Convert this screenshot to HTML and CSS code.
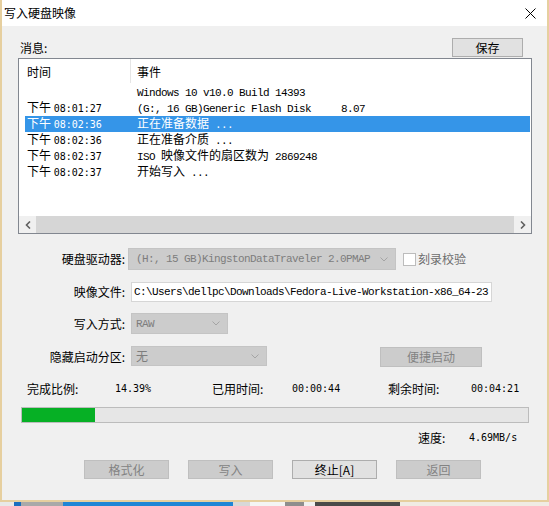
FILE: index.html
```html
<!DOCTYPE html>
<html lang="zh-CN">
<head>
<meta charset="utf-8">
<title>写入硬盘映像</title>
<link rel="stylesheet" href="styles.css">
</head>
<body>
<div class="window">
  <div class="titlebar">
    <span class="title">写入硬盘映像</span>
    <svg class="close" width="11" height="11" viewBox="0 0 11 11"><path d="M0.5 0.5 L10.5 10.5 M10.5 0.5 L0.5 10.5" stroke="#000" stroke-width="1" fill="none"/></svg>
  </div>
  <div class="client">
    <div class="msg-head">
      <span class="msg-label">消息:</span>
      <div class="btn save">保存</div>
    </div>
    <div class="listview">
      <div class="lv-header">
        <div class="lv-h-time">时间</div>
        <div class="lv-h-div"></div>
        <div class="lv-h-event">事件</div>
      </div>
      <div class="lv-rows">
        <div class="row"><span class="c-time"></span><span class="c-event"><span class="m">Windows 10 v10.0 Build 14393</span></span></div>
        <div class="row"><span class="c-time">下午 <span class="d">08:01:27</span></span><span class="c-event"><span class="m">(G:, 16 GB)Generic Flash Disk     8.07</span></span></div>
        <div class="row sel"><span class="c-time">下午 <span class="d">08:02:36</span></span><span class="c-event">正在准备数据<span class="m"> ...</span></span></div>
        <div class="row"><span class="c-time">下午 <span class="d">08:02:36</span></span><span class="c-event">正在准备介质<span class="m"> ...</span></span></div>
        <div class="row"><span class="c-time">下午 <span class="d">08:02:37</span></span><span class="c-event"><span class="m">ISO </span>映像文件的扇区数为<span class="m"> 2869248</span></span></div>
        <div class="row"><span class="c-time">下午 <span class="d">08:02:37</span></span><span class="c-event">开始写入<span class="m"> ...</span></span></div>
      </div>
      <div class="lv-spacer"></div>
      <div class="hscroll">
        <div class="sb-btn"><svg width="6" height="8" viewBox="0 0 6 8"><polyline points="5,0.5 1.5,4 5,7.5" fill="none" stroke="#606060" stroke-width="1.6"/></svg></div>
        <div class="sb-track"></div>
        <div class="sb-btn"><svg width="6" height="8" viewBox="0 0 6 8"><polyline points="1,0.5 4.5,4 1,7.5" fill="none" stroke="#606060" stroke-width="1.6"/></svg></div>
      </div>
    </div>

    <div class="form">
      <div class="frow r1">
        <span class="flabel">硬盘驱动器:</span>
        <div class="combo dis c-drive"><span class="m">(H:, 15 GB)KingstonDataTraveler 2.0PMAP</span><svg class="arrow" width="8" height="5" viewBox="0 0 8 5"><polyline points="0.5,0.5 4,4 7.5,0.5" fill="none" stroke="#a4a4a4" stroke-width="1"/></svg></div>
        <div class="check"></div>
        <span class="check-label">刻录校验</span>
      </div>
      <div class="frow r2">
        <span class="flabel">映像文件:</span>
        <div class="textbox"><span class="m">C:\Users\dellpc\Downloads\Fedora-Live-Workstation-x86_64-23</span></div>
      </div>
      <div class="frow r3">
        <span class="flabel">写入方式:</span>
        <div class="combo dis c-mode"><span class="m">RAW</span><svg class="arrow" width="8" height="5" viewBox="0 0 8 5"><polyline points="0.5,0.5 4,4 7.5,0.5" fill="none" stroke="#a4a4a4" stroke-width="1"/></svg></div>
      </div>
      <div class="frow r4">
        <span class="flabel">隐藏启动分区:</span>
        <div class="combo dis c-part"><span>无</span><svg class="arrow" width="8" height="5" viewBox="0 0 8 5"><polyline points="0.5,0.5 4,4 7.5,0.5" fill="none" stroke="#a4a4a4" stroke-width="1"/></svg></div>
        <div class="btn dis quick">便捷启动</div>
      </div>
    </div>

    <div class="stats">
      <span>完成比例:</span>
      <span class="d">14.39%</span>
      <span>已用时间:</span>
      <span class="d">00:00:44</span>
      <span>剩余时间:</span>
      <span class="d">00:04:21</span>
    </div>

    <div class="progress"><div class="fill" style="width:14.39%"></div></div>

    <div class="speed">
      <span class="speed-label">速度:</span>
      <span class="d">4.69MB/s</span>
    </div>

    <div class="actions">
      <div class="btn dis act">格式化</div>
      <div class="btn dis act">写入</div>
      <div class="btn act">终止[A]</div>
      <div class="btn dis act">返回</div>
    </div>
  </div>
</div>
<div class="desktop">
  <div class="seg s1"></div><div class="seg s2"></div><div class="seg s3"></div><div class="seg s4"></div><div class="seg s5"></div><div class="seg s6"></div><div class="seg s7"></div><div class="seg s8"></div><div class="seg s9"></div><div class="seg s10"></div>
</div>
</body>
</html>
```

FILE: styles.css
```css
* { box-sizing: border-box; }
html, body { margin: 0; padding: 0; }
body {
  width: 549px;
  height: 506px;
  overflow: hidden;
  background: #f3ece0;
  font-family: "Noto Sans CJK SC", "Microsoft YaHei", sans-serif;
  font-size: 12px;
  line-height: 16px;
  color: #000;
}
.m {
  font-family: "Liberation Mono", monospace;
  font-size: 11px;
  letter-spacing: -0.6px;
  white-space: pre;
}
.d {
  font-family: "DejaVu Sans Mono", monospace;
  font-size: 10px;
  white-space: pre;
}

.window {
  width: 549px;
  height: 502px;
  border-left: 2px solid #e6cf9f;
  border-right: 2px solid #e6cf9f;
  border-bottom: 2px solid #e6cf9f;
  background: #f0f0f0;
  display: flex;
  flex-direction: column;
}
.titlebar {
  flex: none;
  height: 26px;
  background: #fff;
  display: flex;
  align-items: center;
  justify-content: space-between;
  padding-left: 2px;
  padding-right: 11px;
}
.title { line-height: 16px; }
.close { display: block; margin-top: 1px; }

.client {
  flex: 1;
  display: flex;
  flex-direction: column;
  padding: 0 15px 0 16px;
}
.msg-head {
  height: 32px;
  display: flex;
  justify-content: space-between;
  align-items: flex-end;
}
.msg-label { margin-left: 2px; margin-bottom: 2px; }

.btn {
  height: 19px;
  display: flex;
  align-items: center;
  justify-content: center;
  border: 1px solid #adadad;
  background: #e1e1e1;
  color: #000;
}
.btn.dis {
  border-color: #bfbfbf;
  background: #cccccc;
  color: #838383;
}
.btn.save { width: 71px; margin-right: 9px; margin-bottom: 1px; }

.listview {
  height: 176px;
  border: 1px solid #828790;
  background: #fff;
  display: flex;
  flex-direction: column;
}
.lv-header { height: 25px; display: flex; align-items: center; }
.lv-h-time { width: 111px; padding-left: 8px; }
.lv-h-div { width: 1px; height: 24px; align-self: flex-start; background: #e5e5e5; }
.lv-h-event { padding-left: 6px; }
.lv-rows { display: flex; flex-direction: column; }
.row {
  height: 16px;
  margin: 0 1px 0 6px;
  display: flex;
  align-items: center;
  white-space: pre;
}
.row.sel { background: #3595e8; color: #fff; }
.c-time { width: 112px; padding-left: 2px; }
.lv-spacer { flex: 1; }
.hscroll { height: 17px; display: flex; }
.sb-btn {
  width: 17px;
  display: flex;
  align-items: center;
  justify-content: center;
  background: #f0f0f0;
}
.sb-track { flex: 1; background: #d6d6d6; }

.form { margin-top: 14px; display: flex; flex-direction: column; }
.frow { display: flex; align-items: center; }
.r1 { height: 22px; }
.r2 { height: 20px; margin-top: 12px; }
.r3 { height: 21px; margin-top: 11px; }
.r4 { height: 21px; margin-top: 12px; }
.flabel {
  width: 110px;
  flex: none;
  text-align: right;
  padding-right: 3px;
  margin-right: 3px;
}
.combo {
  height: 100%;
  display: flex;
  align-items: center;
  justify-content: space-between;
  padding: 0 7px 0 4px;
  overflow: hidden;
  white-space: nowrap;
}
.combo.dis { background: #cccccc; border: 1px solid #c4c4c4; color: #7d7d7d; }
.c-drive { width: 268px; margin-left: -3px; padding-left: 7px; }
.c-mode { width: 97px; }
.c-part { width: 136px; height: 20px; align-self: flex-start; }
.arrow { flex: none; display: block; }
.check {
  width: 13px;
  height: 13px;
  margin-left: 7px;
  border: 1px solid #bcbcbc;
  background: #fff;
}
.check-label { margin-left: 2px; color: #6d6d6d; }
.textbox {
  width: 361px;
  height: 100%;
  background: #fff;
  border: 1px solid #d6d6d6;
  padding-left: 2px;
  display: flex;
  align-items: center;
  overflow: hidden;
  white-space: nowrap;
}
.quick { width: 102px; height: 20px; margin-left: 113px; align-self: flex-end; }

.stats {
  margin-top: 14px;
  height: 16px;
  padding-left: 9px;
  display: grid;
  grid-template-columns: 88px 97px 80px 96px 83px auto;
  align-items: center;
}
.progress {
  margin-top: 10px;
  margin-left: 3px;
  width: 508px;
  height: 16px;
  border: 1px solid #bcbcbc;
  background: #e6e6e6;
}
.fill { height: 100%; background: #06b025; }
.speed {
  margin-top: 7px;
  height: 16px;
  padding-left: 400px;
  display: flex;
  align-items: center;
}
.speed-label { width: 51px; }
.actions {
  margin-top: 14px;
  padding-left: 66px;
  display: flex;
  gap: 19px;
}
.act { width: 85px; }

.desktop { height: 4px; display: flex; }
.seg { height: 100%; }
.s1 { width: 14px; background: #e8e8e8; }
.s2 { width: 7px; background: #1b6fc0; }
.s3 { width: 42px; background: #a9a9a9; }
.s4 { width: 170px; background: #1f86d6; }
.s5 { width: 17px; background: #d8d8d8; }
.s6 { width: 35px; background: #f4f4f4; }
.s7 { width: 19px; background: #8e8e8e; }
.s8 { width: 11px; background: #f0f0f0; }
.s9 { width: 85px; background: #4a4a4a; }
.s10 { flex: 1; background: #f0ebe4; }
```
